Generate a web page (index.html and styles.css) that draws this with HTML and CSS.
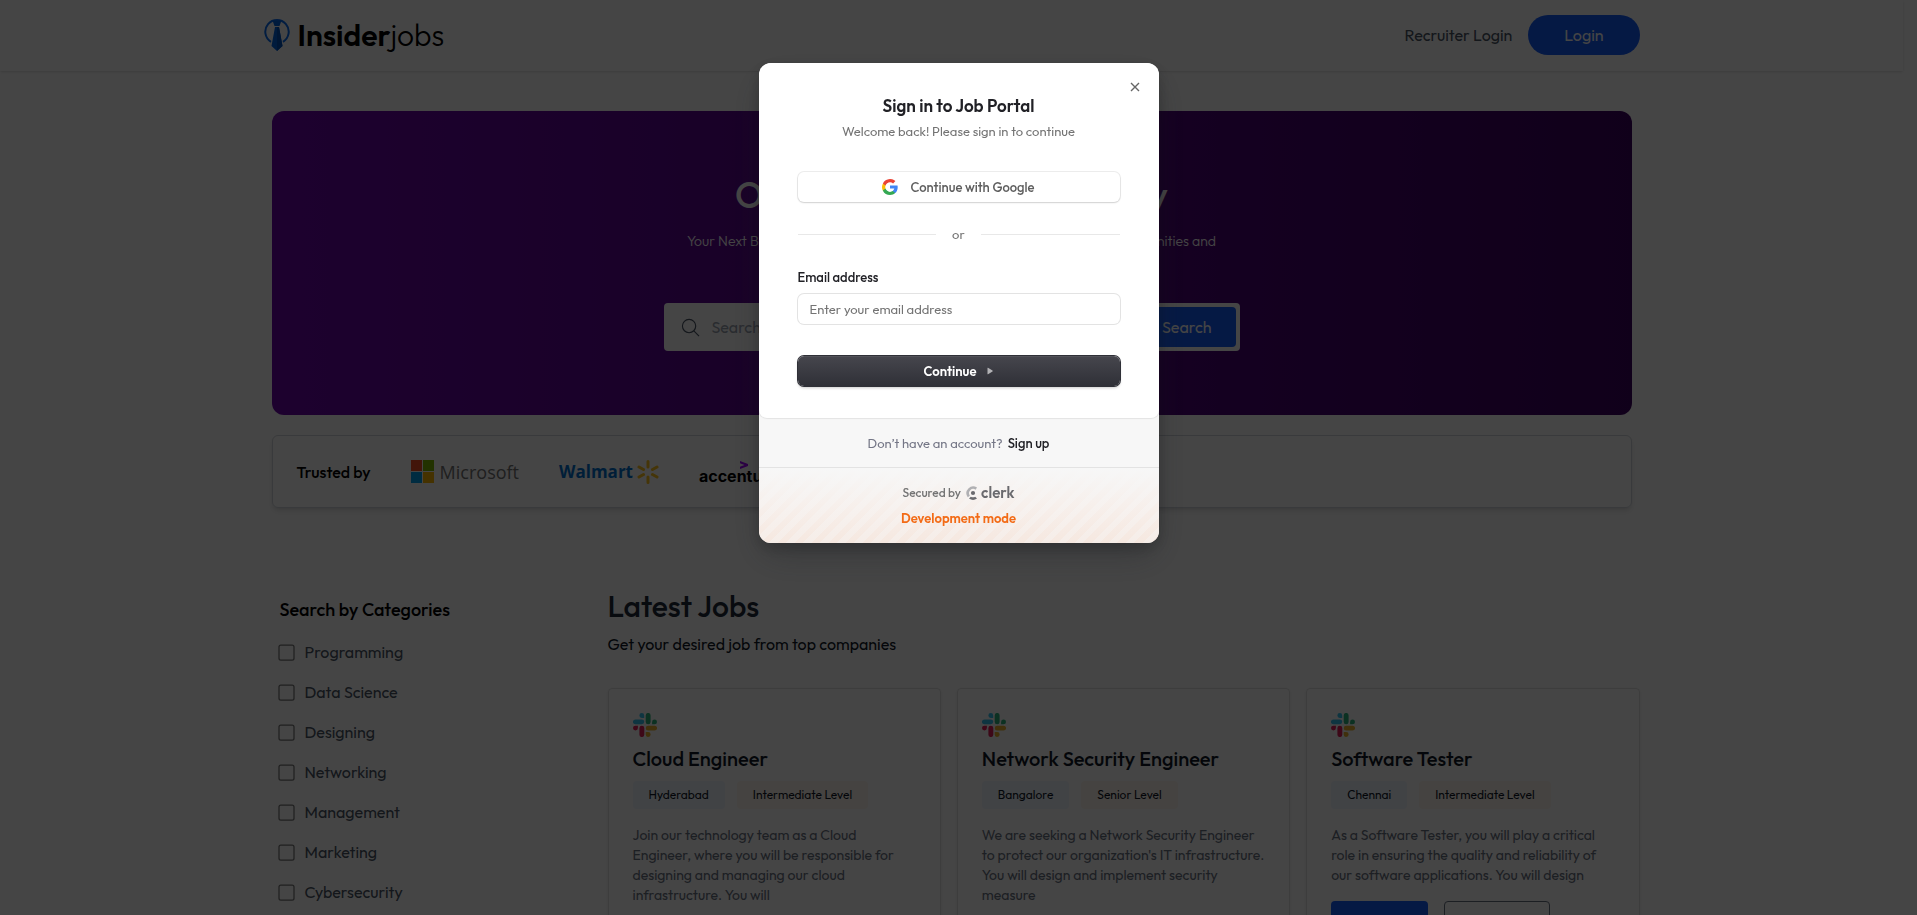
FILE: index.html
```html
<!DOCTYPE html>
<html lang="en">
<head>
<meta charset="utf-8">
<title>Insiderjobs</title>
<link rel="stylesheet" href="styles.css">
</head>
<body>
<svg width="0" height="0" class="sprite" aria-hidden="true">
  <symbol id="slack" viewBox="0 0 24 24">
    <path fill="#36C5F0" d="M8.8 0a2.4 2.4 0 1 0 0 4.9h2.4V2.4A2.4 2.4 0 0 0 8.8 0zM8.8 6.4H2.4a2.4 2.4 0 1 0 0 4.9h6.4a2.4 2.4 0 1 0 0-4.9z"/>
    <path fill="#2EB67D" d="M24 8.9a2.4 2.4 0 1 0-4.9 0v2.4h2.5A2.4 2.4 0 0 0 24 8.9zM17.6 8.9V2.4a2.4 2.4 0 1 0-4.9 0v6.5a2.4 2.4 0 1 0 4.9 0z"/>
    <path fill="#ECB22E" d="M15.2 24a2.4 2.4 0 1 0 0-4.9h-2.5v2.5A2.4 2.4 0 0 0 15.2 24zM15.2 17.6h6.4a2.4 2.4 0 1 0 0-4.9h-6.4a2.4 2.4 0 1 0 0 4.9z"/>
    <path fill="#E01E5A" d="M0 15.1a2.4 2.4 0 1 0 4.9 0v-2.4H2.4A2.4 2.4 0 0 0 0 15.1zM6.4 15.1v6.5a2.4 2.4 0 1 0 4.9 0v-6.5a2.4 2.4 0 1 0-4.9 0z"/>
  </symbol>
</svg>

<header class="site-header">
  <div class="container nav">
    <a class="brand" href="#">
      <svg class="brand-mark" viewBox="0 0 26 32" aria-hidden="true">
        <path d="M7 22.8A11.700 11.700 0 1 1 19 22.8" fill="none" stroke="#0a6cf0" stroke-width="2"/>
        <path d="M8.500 1.500h9L15.500 7h-5zM11 8h4L18.500 27 13 32 7.500 27z" fill="#0066e0"/>
        <path d="M13 8h2L18.500 27 13 32z" fill="#0054bd"/>
      </svg>
      <span class="brand-name"><b>Insider</b>jobs</span>
    </a>
    <div class="nav-actions">
      <button class="link-button" type="button">Recruiter Login</button>
      <button class="login-button" type="button">Login</button>
    </div>
  </div>
</header>

<main class="container">
  <section class="hero">
    <h1 class="hero-title">Over 10,000+ jobs to apply</h1>
    <p class="hero-text">Your Next Big Career Move Starts Right Here - Explore the Best Job Opportunities and Take the First Step Toward Your Future!</p>
    <form class="search">
      <label class="search-field">
        <svg class="search-icon" viewBox="0 0 20 20" aria-hidden="true"><circle cx="8.5" cy="8.5" r="7"/><path d="M13.5 13.5 19 19"/></svg>
        <input type="text" placeholder="Search for jobs" aria-label="Search for jobs">
      </label>
      <label class="search-field">
        <input type="text" placeholder="Location" aria-label="Location">
      </label>
      <button class="search-button" type="button">Search</button>
    </form>
  </section>

  <section class="trusted">
    <p class="trusted-label">Trusted by</p>
    <div class="company microsoft">
      <svg class="ms-mark" viewBox="0 0 23 23" aria-hidden="true"><path fill="#f25022" d="M0 0h11v11H0z"/><path fill="#7fba00" d="M12 0h11v11H12z"/><path fill="#00a4ef" d="M0 12h11v11H0z"/><path fill="#ffb900" d="M12 12h11v11H12z"/></svg>
      <span>Microsoft</span>
    </div>
    <div class="company walmart">
      <span>Walmart</span>
      <svg class="spark" viewBox="0 0 22 24" aria-hidden="true"><path d="M11 1.500v5.500M11 17v5.500M2 7l4.500 2.500M15.500 14.500 20 17M20 7l-4.500 2.500M6.500 14.500 2 17"/></svg>
    </div>
    <div class="company accenture">
      <svg class="chevron" viewBox="0 0 8 8" aria-hidden="true"><path d="M0 0 8 3v2L0 8V5.700L4.500 4 0 2.300z"/></svg>
      <span>accenture</span>
    </div>
  </section>

  <div class="listing">
    <aside class="filters">
      <h2 class="filters-title">Search by Categories</h2>
      <ul class="filter-list">
        <li><label><input type="checkbox">Programming</label></li>
        <li><label><input type="checkbox">Data Science</label></li>
        <li><label><input type="checkbox">Designing</label></li>
        <li><label><input type="checkbox">Networking</label></li>
        <li><label><input type="checkbox">Management</label></li>
        <li><label><input type="checkbox">Marketing</label></li>
        <li><label><input type="checkbox">Cybersecurity</label></li>
      </ul>
    </aside>
    <section class="jobs">
      <h2 class="jobs-title">Latest Jobs</h2>
      <p class="jobs-text">Get your desired job from top companies</p>
      <div class="job-grid">
        <article class="job">
          <svg class="job-logo" aria-hidden="true"><use href="#slack"/></svg>
          <h3>Cloud Engineer</h3>
          <div class="tags"><span class="tag place">Hyderabad</span><span class="tag level">Intermediate Level</span></div>
          <p>Join our technology team as a Cloud Engineer, where you will be responsible for designing and managing our cloud infrastructure. You will</p>
          <div class="job-actions"><button class="apply" type="button">Apply now</button><button class="more" type="button">Learn more</button></div>
        </article>
        <article class="job">
          <svg class="job-logo" aria-hidden="true"><use href="#slack"/></svg>
          <h3>Network Security Engineer</h3>
          <div class="tags"><span class="tag place">Bangalore</span><span class="tag level">Senior Level</span></div>
          <p>We are seeking a Network Security Engineer to protect our organization's IT infrastructure. You will design and implement security measure</p>
          <div class="job-actions"><button class="apply" type="button">Apply now</button><button class="more" type="button">Learn more</button></div>
        </article>
        <article class="job">
          <svg class="job-logo" aria-hidden="true"><use href="#slack"/></svg>
          <h3>Software Tester</h3>
          <div class="tags"><span class="tag place">Chennai</span><span class="tag level">Intermediate Level</span></div>
          <p>As a Software Tester, you will play a critical role in ensuring the quality and reliability of our software applications. You will design</p>
          <div class="job-actions"><button class="apply" type="button">Apply now</button><button class="more" type="button">Learn more</button></div>
        </article>
      </div>
    </section>
  </div>
</main>

<div class="backdrop">
  <div class="modal" role="dialog" aria-modal="true" aria-labelledby="signin-title">
    <div class="modal-card">
      <button class="close" type="button" aria-label="Close"><svg viewBox="0 0 10 10" aria-hidden="true"><path d="M1 1l8 8M9 1 1 9"/></svg></button>
      <h2 class="modal-title" id="signin-title">Sign in to Job Portal</h2>
      <p class="modal-subtitle">Welcome back! Please sign in to continue</p>
      <button class="google" type="button">
        <svg viewBox="0 0 16 16" aria-hidden="true"><path fill="#4285F4" d="M15.7 8.200c0-.6-.1-1.100-.2-1.600H8v3h4.300a3.700 3.700 0 0 1-1.600 2.400v2h2.600c1.500-1.400 2.400-3.400 2.400-5.800z"/><path fill="#34A853" d="M8 16c2.200 0 4-.7 5.300-1.900l-2.600-2c-.7.500-1.600.8-2.700.8-2.100 0-3.800-1.400-4.500-3.300H.9v2.100A8 8 0 0 0 8 16z"/><path fill="#FBBC05" d="M3.500 9.500a4.800 4.800 0 0 1 0-3V4.400H.9a8 8 0 0 0 0 7.200z"/><path fill="#EA4335" d="M8 3.200c1.200 0 2.200.4 3.100 1.200l2.300-2.300A8 8 0 0 0 .9 4.400l2.600 2.100C4.200 4.600 5.900 3.200 8 3.200z"/></svg>
        <span>Continue with Google</span>
      </button>
      <div class="divider"><span>or</span></div>
      <form class="signin-form">
        <label for="email">Email address</label>
        <input id="email" type="email" placeholder="Enter your email address">
        <button class="continue" type="button"><span>Continue</span><svg viewBox="0 0 6 8" aria-hidden="true"><path d="M.5 1v6q0 .5.5.3L5.500 4.500q.5-.5 0-1L1 .8Q.5.500.5 1z"/></svg></button>
      </form>
    </div>
    <p class="signup"><span>Don’t have an account?</span><a href="#">Sign up</a></p>
    <div class="secured">
      <div class="secured-row">
        <span>Secured by</span>
        <span class="clerk"><svg viewBox="0 0 12 14" aria-hidden="true"><path class="clerk-arc" d="M10.300 2.600A5.500 5.500 0 0 0 2.800 10.400"/><circle cx="7" cy="7" r="2.100"/><path d="M11 12.600 9.200 10.700a4.500 4.500 0 0 1-4.400 0L3 12.600a7 7 0 0 0 8 0z"/></svg>clerk</span>
      </div>
      <p class="dev-mode">Development mode</p>
    </div>
  </div>
</div>
</body>
</html>
```
FILE: styles.css
```css
* { box-sizing: border-box; }
body, h1, h2, h3, p, ul { margin: 0; padding: 0; }
body {
  height: 100vh;
  overflow: hidden;
  padding-right: 14px;
  background: #fff;
  color: #000;
  font-family: Outfit, Lato, sans-serif;
  font-size: 16px;
  line-height: 24px;
}
h1, h2, h3 { font-weight: 500; }
ul { list-style: none; }
a { color: inherit; text-decoration: none; }
button, input { font: inherit; color: inherit; }
button { border: 0; padding: 0; background: none; cursor: pointer; }
.sprite { position: absolute; }

.container { max-width: 1536px; margin: 0 auto; padding: 0 80px; }

.site-header { padding: 15px 0 16px; box-shadow: 0 1px 3px rgba(0,0,0,.1), 0 1px 2px -1px rgba(0,0,0,.1); }
.nav { display: flex; align-items: center; justify-content: space-between; }
.brand { display: flex; align-items: center; gap: 8px; }
.brand-mark { width: 26px; height: 32px; }
.brand-name { font-size: 30px; line-height: 40px; font-weight: 300; }
.brand-name b { font-weight: 600; }
.nav-actions { display: flex; align-items: center; gap: 16px; }
.link-button { color: #4a5565; }
.login-button { padding: 8px 36px; border-radius: 20px; background: #155dfc; color: #fff; }

.hero {
  margin: 40px 8px 20px;
  padding: 64px 0;
  border-radius: 12px;
  background: linear-gradient(to right, #6c06ab, #3e0062);
  color: #fff;
  text-align: center;
}
.hero-title { margin-bottom: 16px; font-size: 36px; line-height: 40px; }
.hero-text { max-width: 536px; margin: 0 auto 32px; font-size: 14px; line-height: 20px; font-weight: 300; }
.search {
  display: flex;
  align-items: center;
  width: 576px;
  height: 48px;
  margin: 0 auto;
  padding-right: 4px;
  border-radius: 4px;
  background: #fff;
  color: #6a7282;
}
.search-field { display: flex; flex: 1; align-items: center; gap: 12px; padding-left: 17px; }
.search-field input { width: 100%; min-width: 0; border: 0; outline: 0; padding: 0; background: none; }
.search-field input::placeholder { color: #99a1af; }
.search-icon { flex: none; width: 19px; height: 19px; fill: none; stroke: #4a5565; stroke-width: 1.2; }
.search-button { padding: 8px 24px; border-radius: 4px; background: #155dfc; color: #fff; }

.trusted {
  display: flex;
  align-items: center;
  gap: 40px;
  height: 73px;
  margin: 0 8px;
  padding: 0 24px;
  border: 1px solid #d1d5dc;
  border-radius: 6px;
  box-shadow: 0 4px 6px -1px rgba(0,0,0,.1), 0 2px 4px -2px rgba(0,0,0,.1);
}
.trusted-label { font-weight: 500; }
.company { display: flex; align-items: center; }
.microsoft { gap: 6px; color: #737373; font: 500 18px/24px "Open Sans", sans-serif; }
.ms-mark { width: 23px; height: 23px; }
.walmart { gap: 4px; color: #0071ce; font: 700 17px/24px "Open Sans", sans-serif; }
.spark { width: 22px; height: 24px; fill: none; stroke: #ffc220; stroke-width: 3; stroke-linecap: round; }
.accenture { flex-direction: column; font: 700 16px/16px Inter, sans-serif; }
.accenture span { line-height: 14px; }
.chevron { width: 8px; height: 8px; margin-left: 10px; fill: #a100ff; }

.listing { display: flex; padding: 80px 0 32px; }
.filters { flex: none; width: 25%; padding: 10px 16px; }
.filters-title { margin-bottom: 18px; font-size: 18px; line-height: 24px; }
.filter-list { display: grid; gap: 16px; color: #4a5565; }
.filter-list label { display: flex; align-items: center; gap: 12px; }
.filter-list input {
  appearance: none;
  width: 13px;
  height: 13px;
  margin: 0;
  border: 1px solid #767676;
  border-radius: 2px;
  transform: scale(1.25);
}
.jobs { flex: 1; }
.jobs-title { color: #1e2939; font-size: 30px; line-height: 36px; }
.jobs-text { margin: 8px 0 32px; color: #101828; }
.job-grid { display: grid; grid-template-columns: repeat(3, 1fr); gap: 16px; align-items: start; }
.job { padding: 24px; border: 1px solid #e0e0e0; border-radius: 4px; box-shadow: 0 1px 3px rgba(0,0,0,.1); }
.job-logo { display: block; width: 24px; height: 24px; }
.job h3 { margin: 8px 0; color: #101828; font-size: 20px; line-height: 28px; }
.tags { display: flex; gap: 12px; color: #101828; font-size: 12px; line-height: 16px; }
.tag { padding: 6px 16px; border-radius: 4px; }
.place { background: #eff6ff; }
.level { background: #fff7f0; }
.job p { margin: 16px 0; color: #6a7282; font-size: 14px; line-height: 20px; }
.job-actions { display: flex; gap: 16px; font-size: 14px; line-height: 20px; }
.apply { padding: 8px 16px; border-radius: 4px; background: #155dfc; color: #fff; }
.more { padding: 8px 16px; border: 1px solid #6a7282; border-radius: 4px; color: #4a5565; }

.backdrop {
  position: fixed;
  inset: 0;
  display: flex;
  justify-content: center;
  align-items: flex-start;
  padding-top: 63px;
  background: rgba(0,0,0,.73);
}
.modal {
  width: 400px;
  overflow: hidden;
  border-radius: 12px;
  background: #f7f7f7;
  color: #747686;
  font-size: 13px;
  line-height: 18px;
  text-align: center;
  box-shadow: 0 15px 35px -5px rgba(25,28,33,.35), 0 5px 15px rgba(0,0,0,.2);
}
.modal-card {
  position: relative;
  padding: 31px 39px 32px;
  border-radius: 0 0 8px 8px;
  background: #fff;
  box-shadow: 0 0 1px 1px rgba(0,0,0,.08);
}
.close { position: absolute; top: 15px; right: 15px; display: grid; place-items: center; width: 18px; height: 18px; }
.close svg { width: 10px; height: 10px; fill: none; stroke: #666; stroke-width: 1.4; }
.modal-title { color: #212126; font-size: 17px; line-height: 24px; font-weight: 600; }
.modal-subtitle { margin: 4px 0 32px; color: #747474; }
.google {
  display: flex;
  align-items: center;
  justify-content: center;
  gap: 12px;
  width: 100%;
  height: 30px;
  border-radius: 6px;
  color: #5e5e5e;
  box-shadow: 0 0 0 1px rgba(0,0,0,.07), 0 1px 2px rgba(0,0,0,.12);
}
.google svg { width: 16px; height: 16px; }
.divider { display: flex; align-items: center; gap: 16px; margin: 23px 0 25px; color: #747474; }
.divider::before, .divider::after { content: ""; flex: 1; height: 1px; background: #e8e8e8; }
.signin-form { display: flex; flex-direction: column; }
.signin-form label { align-self: flex-start; margin-bottom: 8px; color: #212126; }
.signin-form input {
  height: 30px;
  border: 0;
  border-radius: 6px;
  padding: 0 12px;
  outline: 0;
  color: #212126;
  box-shadow: 0 0 0 1px rgba(0,0,0,.11);
}
.signin-form input::placeholder { color: #747474; }
.google, .signin-form label, .signup a { font-weight: 500; }
.continue {
  display: flex;
  align-items: center;
  justify-content: center;
  gap: 11px;
  height: 30px;
  margin-top: 32px;
  border-radius: 6px;
  background: linear-gradient(#46464d, #2f3037);
  color: #fff;
  font-weight: 600;
  box-shadow: 0 0 0 1px #2f3037, 0 2px 3px rgba(0,0,0,.2), inset 0 1px 0 rgba(255,255,255,.07);
}
.continue svg { width: 6px; height: 8px; fill: #b2b2b5; }
.signup { display: flex; justify-content: center; gap: 5px; padding: 16px 0 15px; border-bottom: 1px solid #e3e3e3; }
.signup a { color: #212126; }
.secured {
  padding: 16px 0;
  background:
    linear-gradient(#f7f7f7, rgba(247,247,247,0)),
    repeating-linear-gradient(-45deg, #f6e8e0 0 6px, #f6ede8 6px 12px);
}
.secured-row { display: flex; align-items: center; justify-content: center; gap: 5px; color: #747474; font-size: 12px; font-weight: 500; }
.clerk { display: flex; align-items: center; gap: 3px; color: #6a6a6e; font-size: 15px; font-weight: 600; }
.clerk svg { width: 12px; height: 14px; fill: #6a6a6e; }
.clerk .clerk-arc { fill: none; stroke: #b0b0b3; stroke-width: 2.6; }
.dev-mode { margin-top: 7px; color: #f36b16; font-weight: 600; }
```
